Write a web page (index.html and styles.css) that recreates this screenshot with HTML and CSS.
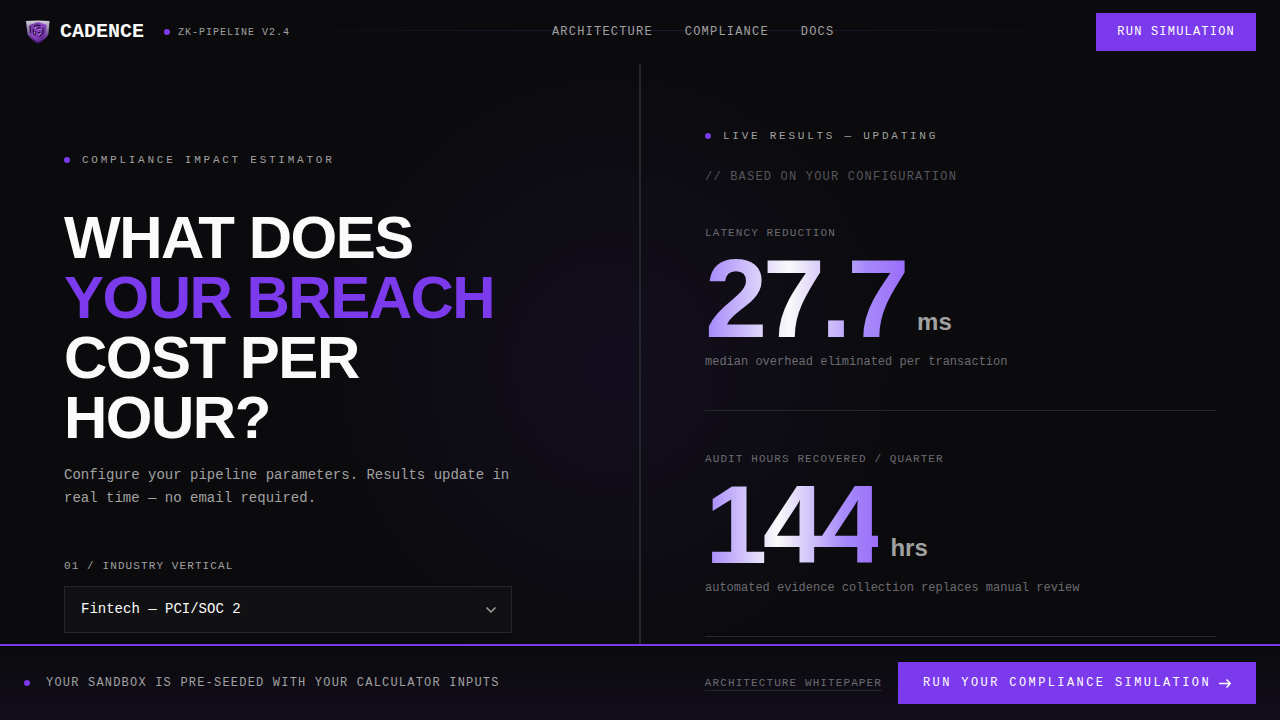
FILE: index.html
```html
<!DOCTYPE html>
<html lang="en">

<head>
  <meta charset="UTF-8">
  <meta name="viewport" content="width=device-width, initial-scale=1">
  <title>Cadence - Compliance Impact Estimator</title>
  <link rel="stylesheet" href="styles.css">
</head>

<body>
  <header class="topbar">
    <div class="brand">
      <svg class="logo" width="28" height="28" viewBox="0 4 28 28" aria-hidden="true">
        <defs>
          <linearGradient id="rim" x1="0" y1="0" x2="0" y2="1">
            <stop offset="0" stop-color="#d6d0dc"/>
            <stop offset="0.4" stop-color="#8f7aa6"/>
            <stop offset="0.75" stop-color="#6a2fa0"/>
            <stop offset="1" stop-color="#2a0f4a"/>
          </linearGradient>
          <linearGradient id="core" x1="0" y1="0" x2="1" y2="1">
            <stop offset="0" stop-color="#6d3a9c"/>
            <stop offset="0.5" stop-color="#8d45c4"/>
            <stop offset="1" stop-color="#4a1a80"/>
          </linearGradient>
        </defs>
        <path d="M2 7 L14 6.500 L25.500 7 L24.500 20 Q22 25 14 30 Q6 25 3.500 20 Z" fill="url(#rim)"/>
        <path d="M5.500 11 L14 8 L22.500 11 L21.500 19 Q20 23.500 14 28 Q8 23.500 6.500 19 Z" fill="url(#core)"/>
        <path d="M10 12.500 Q13 10 16.500 12 M9.500 15 Q8.500 19 12 21.500 M12.500 14 H16 V17 M11.500 17 V20 M19 13.500 V18.500 L15.500 23 M13.500 18.500 H16.500 M6 12 L6.500 19" fill="none" stroke="#2a1240" stroke-width="1.200"/>
        <path d="M11 14.500 L12 13 M10.500 18 L11 19.500 M14.500 15.500 H17.500 M17 19 L15 21" fill="none" stroke="#c9a8e6" stroke-width="0.900"/>
      </svg>
      <span class="brand-name">CADENCE</span>
      <span class="version"><i class="dot"></i>ZK-PIPELINE V2.4</span>
    </div>
    <nav class="nav">
      <a href="#architecture">ARCHITECTURE</a>
      <a href="#compliance">COMPLIANCE</a>
      <a href="#docs">DOCS</a>
    </nav>
    <button class="btn" type="button">RUN SIMULATION</button>
  </header>

  <main class="split">
    <section class="config">
      <p class="eyebrow"><i class="dot"></i>COMPLIANCE IMPACT ESTIMATOR</p>
      <h1>WHAT DOES <span class="accent">YOUR BREACH</span> COST PER HOUR?</h1>
      <p class="intro">Configure your pipeline parameters. Results update in real time — no email required.</p>
      <label class="label" for="vertical">01 / INDUSTRY VERTICAL</label>
      <div class="select-wrap">
        <select id="vertical">
          <option>Fintech — PCI/SOC 2</option>
        </select>
        <svg class="chevron" width="12" height="8" viewBox="0 0 12 8" aria-hidden="true">
          <path d="M1.500 1.500 L6 6 L10.500 1.500"/>
        </svg>
      </div>
    </section>

    <section class="results">
      <p class="eyebrow"><i class="dot"></i>LIVE RESULTS — UPDATING</p>
      <p class="hint">// BASED ON YOUR CONFIGURATION</p>
      <div class="metric">
        <h2 class="label">LATENCY REDUCTION</h2>
        <div class="figure"><span class="number">27.7</span><span class="unit">ms</span></div>
        <p class="caption">median overhead eliminated per transaction</p>
      </div>
      <div class="metric">
        <h2 class="label">AUDIT HOURS RECOVERED / QUARTER</h2>
        <div class="figure"><span class="number">144</span><span class="unit">hrs</span></div>
        <p class="caption">automated evidence collection replaces manual review</p>
      </div>
    </section>
  </main>

  <footer class="cta">
    <p class="cta-text"><i class="dot"></i>YOUR SANDBOX IS PRE-SEEDED WITH YOUR CALCULATOR INPUTS</p>
    <div class="cta-actions">
      <a class="whitepaper" href="#whitepaper">ARCHITECTURE WHITEPAPER</a>
      <button class="btn btn-wide" type="button">RUN YOUR COMPLIANCE SIMULATION
        <svg width="12" height="12" viewBox="0 0 12 12" aria-hidden="true">
          <path d="M0 6.500 H11 M7.500 2.500 L11.200 6.500 L7.500 10.500"/>
        </svg>
      </button>
    </div>
  </footer>
</body>

</html>
```
FILE: styles.css
```css
* {
  box-sizing: border-box;
}

body {
  margin: 0;
  height: 100vh;
  display: flex;
  flex-direction: column;
  background: radial-gradient(ellipse 300px 320px at 48% 51%, #130e1e, #0b0b0d) #0b0b0d;
  color: #fafafa;
  font-family: "Liberation Mono", monospace;
  font-size: 12px;
  line-height: 16px;
}

p, h1, h2 {
  margin: 0;
}

a {
  color: inherit;
  text-decoration: none;
}

.dot {
  flex: none;
  width: 6px;
  height: 6px;
  border-radius: 50%;
  background: #7c3aed;
}

/* header */
.topbar {
  flex: none;
  display: flex;
  align-items: center;
  justify-content: space-between;
  height: 64px;
  padding: 0 24px;
  background: linear-gradient(90deg, transparent 20%, #211a38 50%, transparent 88%) 0 30px / 100% 1px no-repeat;
}

.brand {
  display: flex;
  align-items: center;
  gap: 8px;
}

.brand-name {
  font-size: 20px;
  font-weight: bold;
}

.version {
  display: flex;
  align-items: center;
  gap: 8px;
  margin-left: 12px;
  font-size: 10px;
  line-height: 17px;
  letter-spacing: 0.1em;
  color: #a1a1a1;
}

.nav {
  display: flex;
  gap: 32px;
  letter-spacing: 0.1em;
  color: #a1a1a1;
}

.btn {
  padding: 10px 20px;
  border: 1px solid #7c3aed;
  background: #7c3aed;
  color: #fff;
  font-family: inherit;
  font-size: 12px;
  line-height: 16px;
  letter-spacing: 0.1em;
  cursor: pointer;
}

/* two panels */
.split {
  flex: 1;
  min-height: 0;
  display: grid;
  grid-template-columns: 1fr 1fr;
  overflow: hidden;
}

.config {
  padding: 88px 64px 0;
}

.results {
  padding: 64px 64px 0;
  border-left: 2px solid #27272a;
  margin-left: -1px;
}

.eyebrow {
  display: flex;
  align-items: center;
  gap: 12px;
  font-size: 11px;
  letter-spacing: 0.25em;
  color: #a1a1a1;
}

h1 {
  margin-top: 40px;
  max-width: 448px;
  font-family: "Liberation Sans", sans-serif;
  font-size: 60px;
  line-height: 60px;
  letter-spacing: -0.025em;
}

.accent {
  color: #7c3aed;
}

.intro {
  max-width: 448px;
  margin: 16px 0 48px;
  font-size: 14px;
  line-height: 23px;
  color: #a1a1a1;
}

.label {
  display: block;
  font-size: 11px;
  font-weight: normal;
  letter-spacing: 0.1em;
  color: #a1a1a1;
}

.select-wrap {
  position: relative;
  max-width: 448px;
  margin-top: 12px;
}

.select-wrap select {
  display: block;
  appearance: none;
  width: 100%;
  height: 47px;
  padding: 0 40px 2px 16px;
  border: 1px solid #27272a;
  border-radius: 0;
  background: #111113;
  color: #fafafa;
  font-family: inherit;
  font-size: 14px;
}

.chevron {
  position: absolute;
  right: 15px;
  top: 20px;
  pointer-events: none;
}

.chevron path,
.btn-wide path {
  fill: none;
  stroke: #a1a1a1;
  stroke-width: 1.5;
}

.hint {
  margin-top: 25px;
  letter-spacing: 0.1em;
  color: #56565c;
}

.metric {
  padding: 40px 0;
  border-bottom: 1px solid #27272a;
}

.metric .label,
.caption {
  color: #6b6b70;
}

.figure {
  display: flex;
  align-items: flex-end;
  gap: 12px;
  margin: 8px 0 5px;
  font-family: "Liberation Sans", sans-serif;
  font-weight: bold;
}

.number {
  font-size: 112px;
  line-height: 100px;
  letter-spacing: -0.04em;
  background: linear-gradient(90deg, #a78bfa 2%, #fafafa 42%, #a78bfa 80%, #9b6dfa);
  -webkit-background-clip: text;
  background-clip: text;
  color: transparent;
}

.unit {
  padding-bottom: 15px;
  font-size: 24px;
  line-height: 24px;
  color: #a1a1a1;
}

/* bottom bar */
.cta {
  flex: none;
  display: flex;
  align-items: center;
  justify-content: space-between;
  padding: 16px 24px;
  border-top: 2px solid #7c3aed;
  background: linear-gradient(#0b0b0d, #120d1c);
}

.cta-text {
  display: flex;
  align-items: center;
  gap: 16px;
  letter-spacing: 0.1em;
  color: #a1a1a1;
}

.cta-actions {
  display: flex;
  align-items: center;
  gap: 16px;
}

.whitepaper {
  border-bottom: 1px solid #27272a;
  font-size: 11px;
  line-height: 14px;
  letter-spacing: 0.1em;
  color: #6b6b70;
}

.btn-wide {
  display: flex;
  align-items: center;
  gap: 8px;
  padding: 12px 24px;
  letter-spacing: 0.2em;
}

.btn-wide path {
  stroke: #fff;
}
```
